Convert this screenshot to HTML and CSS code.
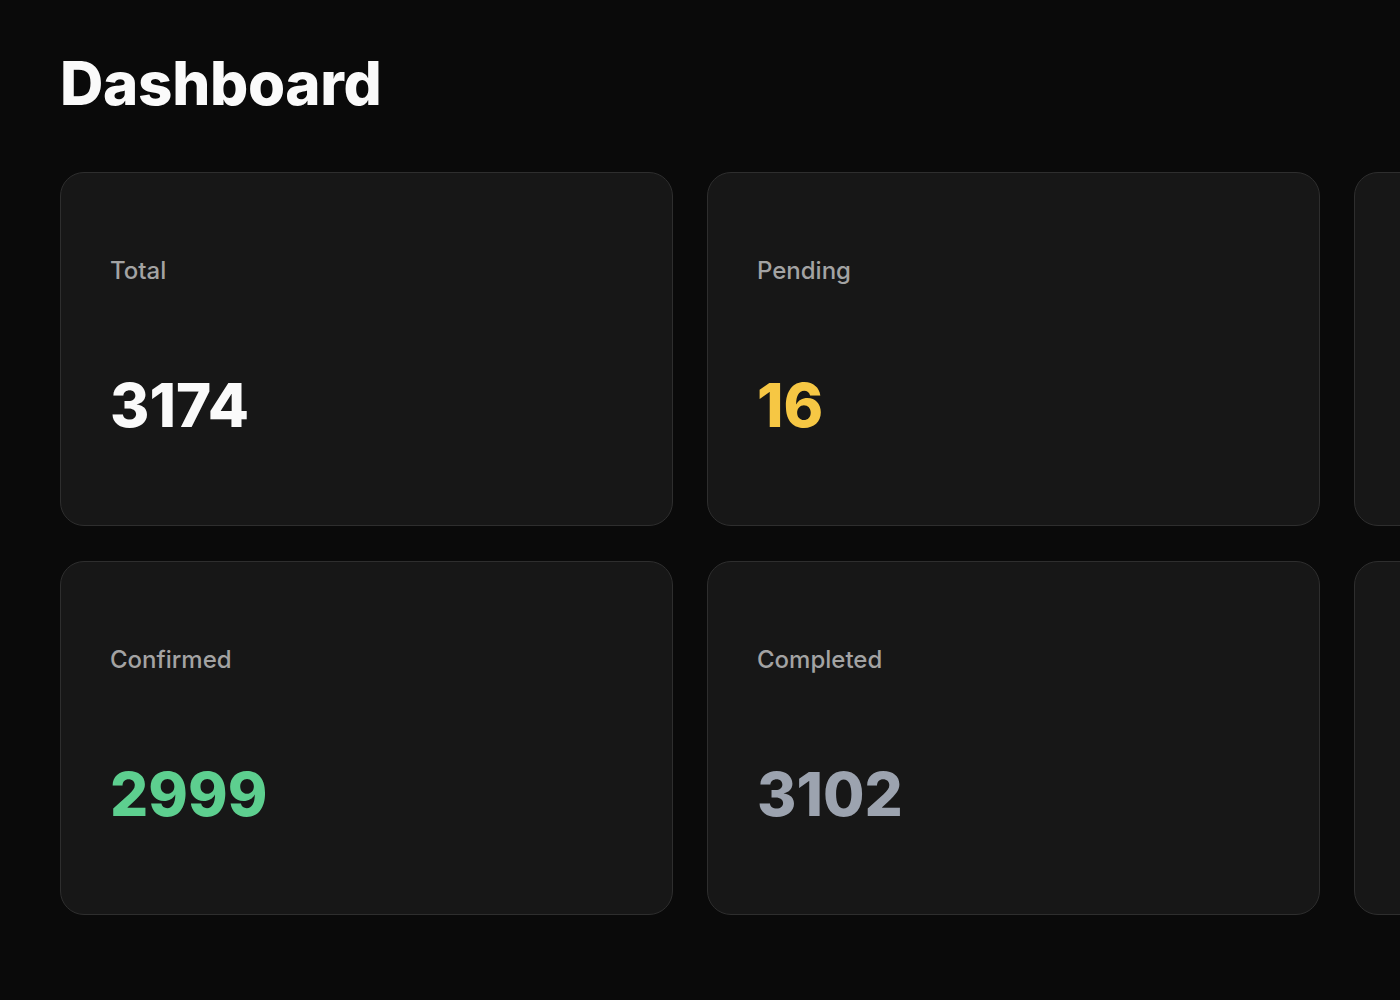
FILE: index.html
```html
<!DOCTYPE html>
<html lang="en">
<head>
<meta charset="utf-8">
<title>Dashboard</title>
<link rel="stylesheet" href="styles.css">
</head>
<body>
<main class="page">
  <h1 class="title">Dashboard</h1>
  <section class="grid">
    <div class="card">
      <div class="label">Total</div>
      <div class="value value-white">3174</div>
    </div>
    <div class="card">
      <div class="label">Pending</div>
      <div class="value value-yellow">16</div>
    </div>
    <div class="card card-offscreen"></div>
    <div class="card">
      <div class="label">Confirmed</div>
      <div class="value value-green">2999</div>
    </div>
    <div class="card">
      <div class="label">Completed</div>
      <div class="value value-gray">3102</div>
    </div>
    <div class="card card-offscreen"></div>
  </section>
</main>
</body>
</html>
```

FILE: styles.css
```css
html, body {
  margin: 0;
  padding: 0;
  background: #0a0a0a;
  overflow: hidden;
  height: 100%;
}

.page {
  padding: 53px 0 0 60px;
  box-sizing: border-box;
}

.title {
  margin: 0 0 59px 0;
  font-family: Inter, "Liberation Sans", sans-serif;
  font-weight: 800;
  font-size: 60px;
  line-height: 60px;
  letter-spacing: -0.005em;
  color: #fafafa;
}

.grid {
  display: grid;
  grid-template-columns: repeat(3, 613px);
  grid-auto-rows: 354px;
  column-gap: 34px;
  row-gap: 35px;
}

.card {
  background: #171717;
  border: 1px solid #2e2e2e;
  border-radius: 24px;
  padding: 82px 49px 90px 49px;
  display: flex;
  flex-direction: column;
  gap: 88px;
}

.label {
  font-family: Inter, "Noto Sans", sans-serif;
  font-weight: 500;
  font-size: 24px;
  line-height: 32px;
  color: #a3a3a3;
}

.value {
  font-family: Inter, "Liberation Sans", sans-serif;
  font-weight: 800;
  font-size: 60px;
  line-height: 60px;
  letter-spacing: 0;
}

.value-white { color: #fafafa; }
.value-yellow { color: #f6c744; }
.value-green { color: #5dcf8f; }
.value-gray { color: #9ca3af; }
```
